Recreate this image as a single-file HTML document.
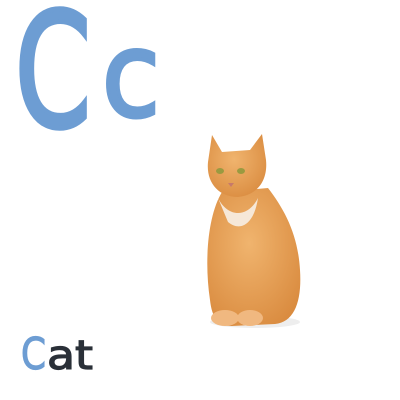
<!DOCTYPE html>
<html><head><style>
body{margin:0;width:400px;height:400px;background:#fff;position:relative;overflow:hidden}
</style></head><body>
<svg width="400" height="400" style="position:absolute;left:0;top:0">
<text x="15" y="126" font-family="DejaVu Sans, sans-serif" font-size="158" fill="#6d9dd3" stroke="#6d9dd3" stroke-width="5" textLength="76" lengthAdjust="spacingAndGlyphs">C</text>
<text x="102" y="116" font-family="DejaVu Sans, sans-serif" font-size="118" fill="#6d9dd3" stroke="#6d9dd3" stroke-width="4" textLength="58" lengthAdjust="spacingAndGlyphs">c</text>
<text x="21" y="369" font-family="DejaVu Sans, sans-serif" font-size="44" fill="#6d9dd3" stroke="#6d9dd3" stroke-width="1.2" textLength="25" lengthAdjust="spacingAndGlyphs">C</text>
<text x="47" y="369" font-family="DejaVu Sans, sans-serif" font-size="40" fill="#2a3038" stroke="#2a3038" stroke-width="1.2" textLength="46" lengthAdjust="spacingAndGlyphs">at</text>
<defs><radialGradient id="g" cx="0.45" cy="0.4" r="0.7"><stop offset="0" stop-color="#f0b46e"/><stop offset="1" stop-color="#d98a3e"/></radialGradient></defs>
<ellipse cx="255" cy="322" rx="45" ry="6" fill="#eee"/>
<path d="M222 192 C208 215 204 260 210 300 C212 318 218 326 232 326 L275 324 C295 322 302 300 300 270 C298 235 285 210 268 188 Z" fill="url(#g)"/>
<path d="M212 135 L222 152 L250 150 L262 134 L266 160 C268 180 258 195 238 197 C218 197 206 182 208 162 Z" fill="url(#g)"/>
<path d="M218 198 C228 218 248 218 258 198 C254 225 240 232 228 222 Z" fill="#f6e8d8"/>
<ellipse cx="225" cy="318" rx="14" ry="8" fill="#f0b880"/>
<ellipse cx="250" cy="318" rx="13" ry="8" fill="#f0b880"/>
<ellipse cx="220" cy="171" rx="4" ry="3" fill="#9a9a40"/>
<ellipse cx="241" cy="171" rx="4" ry="3" fill="#9a9a40"/>
<path d="M228 183 L234 183 L231 187 Z" fill="#c77a6a"/>
</svg>
</body></html>
